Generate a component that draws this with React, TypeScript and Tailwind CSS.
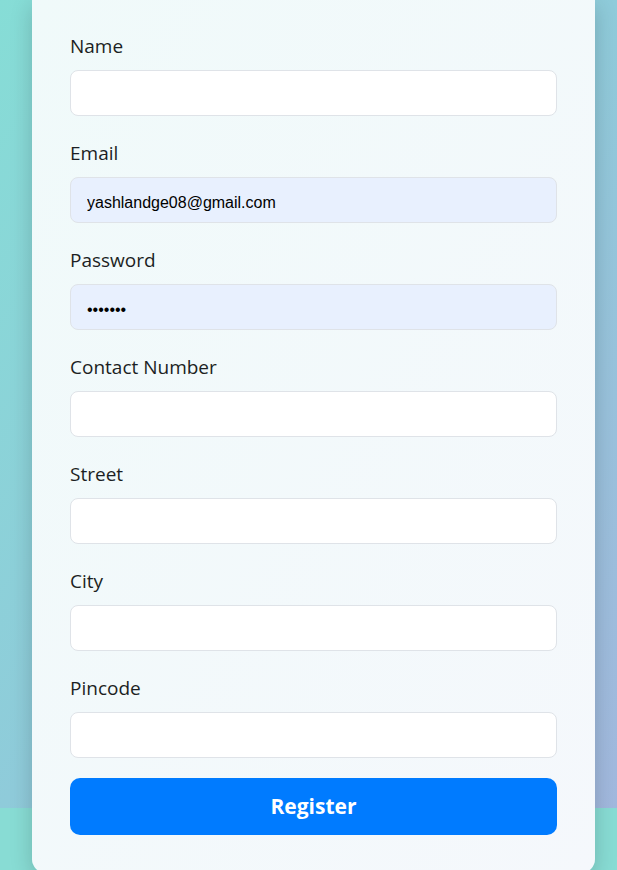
import { useState } from "react";

type Field = {
  label: string;
  type: string;
  value: string;
  autofill?: boolean;
};

const fields: Field[] = [
  { label: "Name", type: "text", value: "" },
  { label: "Email", type: "email", value: "yashlandge08@gmail.com", autofill: true },
  { label: "Password", type: "password", value: "1234567", autofill: true },
  { label: "Contact Number", type: "tel", value: "" },
  { label: "Street", type: "text", value: "" },
  { label: "City", type: "text", value: "" },
  { label: "Pincode", type: "text", value: "" },
];

const App = () => {
  const [values, setValues] = useState<string[]>(fields.map((f) => f.value));

  return (
    <div className="min-h-[870px] bg-[#88dcd4] overflow-hidden">
      <div className="h-[808px] bg-linear-to-br from-[#86ddd6] via-[#8fcbda] to-[#a2b8de]">
        <form
          onSubmit={(e) => e.preventDefault()}
          className="ml-[32px] w-[563px] rounded-b-[14px] bg-linear-to-br from-[#f0fafa] to-[#f5f8fc] px-[38px] pt-[33px] pb-[38px] shadow-[0_6px_22px_rgba(0,0,0,0.18)] font-['Open_Sans','Noto_Sans',sans-serif]"
        >
          <div className="flex flex-col gap-6">
            {fields.map((field, idx) => (
              <div key={field.label}>
                <label className="block mb-[10px] text-[19px] leading-[27px] text-[#1c1f23]">
                  {field.label}
                </label>
                <input
                  type={field.type}
                  value={values[idx]}
                  onChange={(e) =>
                    setValues((prev) => prev.map((v, i) => (i === idx ? e.target.value : v)))
                  }
                  className={`block w-full h-[46px] px-4 pt-[5px] rounded-lg border border-[#dfe3e8] text-[16px] text-black font-['Liberation_Sans',Arial,sans-serif] focus:outline-none ${
                    field.autofill ? "bg-[#e8f0fe]" : "bg-white"
                  }`}
                />
              </div>
            ))}
          </div>
          <button
            type="submit"
            className="mt-[20px] block w-full h-[57px] rounded-[10px] bg-[#007bff] text-white text-[21px] font-bold"
          >
            Register
          </button>
        </form>
      </div>
    </div>
  );
};

export default App;
